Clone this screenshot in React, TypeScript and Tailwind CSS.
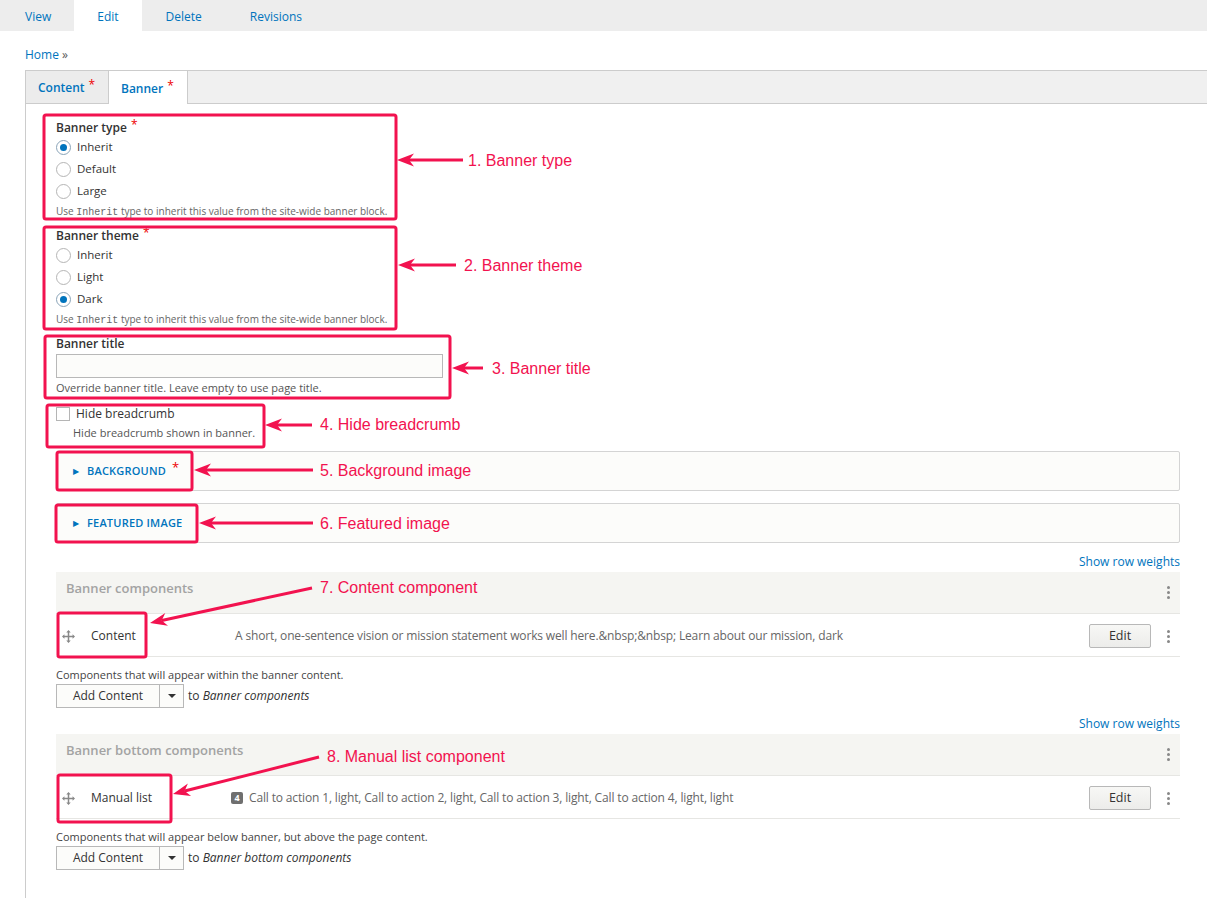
import React from "react";

const RED = "#f2124f";

type Point = [number, number];

const Radio = ({ checked, label }: { checked?: boolean; label: string }) => (
  <div className="flex h-[22px] items-center gap-[6px]">
    <span
      className={`flex h-[15px] w-[15px] items-center justify-center rounded-full border bg-white ${
        checked ? "border-[#8aa4b8]" : "border-[#b5b5b5]"
      }`}
    >
      {checked && <span className="h-[7px] w-[7px] rounded-full bg-[#0074bd]" />}
    </span>
    <span className="text-[11.5px] text-[#333]">{label}</span>
  </div>
);

const Required = () => <span className="ml-[4px] -mt-[6px] text-[12px] font-normal leading-none text-[#e00]">*</span>;

const InheritHelp = () => (
  <div className="h-[18px] text-[10px] leading-[18px] text-[#666]">
    Use <code className="font-['Liberation_Mono',monospace] text-[10px]">Inherit</code> type to inherit this value from the
    site-wide banner block.
  </div>
);

const DragIcon = () => (
  <svg width="13" height="13" viewBox="0 0 14 14" className="text-[#888]">
    <path d="M7 2v10M2 7h10" stroke="currentColor" strokeWidth="1.6" />
    <path d="M7 0l2.4 2.6H4.6zM7 14l2.4-2.6H4.6zM0 7l2.6-2.4v4.8zM14 7l-2.6-2.4v4.8z" fill="currentColor" />
  </svg>
);

const Kebab = () => (
  <div className="flex w-[14px] flex-col items-center gap-[2px]">
    <span className="h-[3px] w-[3px] rounded-full bg-[#888]" />
    <span className="h-[3px] w-[3px] rounded-full bg-[#888]" />
    <span className="h-[3px] w-[3px] rounded-full bg-[#888]" />
  </div>
);

const Details = ({ title, required }: { title: string; required?: boolean }) => (
  <div className="flex h-[40px] items-center rounded-[2px] border border-[#d4d4d4] bg-[#fcfcfa] pl-[16px]">
    <span className="mr-[8px] text-[8px] text-[#0074bd]">▶</span>
    <span className="text-[11px] font-semibold uppercase tracking-[0.2px] text-[#0074bd]">{title}</span>
    {required && <span className="ml-[6px] -mt-[6px] text-[13px] text-[#e00]">*</span>}
  </div>
);

const ComponentTable = ({
  title,
  label,
  summary,
  badge,
}: {
  title: string;
  label: string;
  summary: string;
  badge?: string;
}) => (
  <div>
    <div className="flex h-[42px] items-center justify-between border-b border-[#e6e6e3] bg-[#f5f5f2] pl-[10px] pr-[5px]">
      <span className="-mt-[8px] text-[13px] font-semibold text-[#a3a3a3]">{title}</span>
      <Kebab />
    </div>
    <div className="flex h-[43px] items-center border-b border-[#e6e6e3] pl-[6px] pr-[5px] pt-[2px]">
      <DragIcon />
      <span className="ml-[16px] w-[144px] text-[12px] text-[#333]">{label}</span>
      <span className="flex flex-1 items-center whitespace-nowrap text-[12px] tracking-[-0.15px] text-[#666]">
        {badge && (
          <span className="-ml-[4px] mr-[6px] flex h-[12px] w-[12px] items-center justify-center rounded-[2px] bg-[#6f6f6f] text-[9px] font-bold tracking-normal text-white">
            {badge}
          </span>
        )}
        {summary}
      </span>
      <button className="mr-[10px] h-[24px] w-[62px] rounded-[2px] border border-[#b8b8b8] bg-gradient-to-b from-[#f7f7f5] to-[#ececea] text-[12.5px] text-[#333]">
        Edit
      </button>
      <Kebab />
    </div>
  </div>
);

const AddContent = ({ help, target }: { help: string; target: string }) => (
  <div>
    <div className="mt-[9px] h-[18px] text-[11px] leading-[18px] text-[#444]">{help}</div>
    <div className="flex items-center">
      <div className="flex h-[24px] border border-[#b8b8b8] bg-[#fcfcfa]">
        <span className="flex w-[103px] items-center justify-center border-r border-[#b8b8b8] text-[12px] text-[#333]">
          Add Content
        </span>
        <span className="flex w-[23px] items-center justify-center">
          <span className="h-0 w-0 border-x-[4px] border-t-[4px] border-x-transparent border-t-[#333]" />
        </span>
      </div>
      <span className="ml-[4px] text-[12px] text-[#333]">
        to <em>{target}</em>
      </span>
    </div>
  </div>
);

const boxes = [
  [44, 115, 396, 219],
  [44, 227, 396, 329],
  [45, 336, 450, 398],
  [47, 405, 264, 447],
  [57, 452, 192, 490],
  [56, 505, 197, 542],
  [58, 613, 146, 657],
  [58, 775, 171, 822],
];

const arrows: [Point, Point][] = [
  [[463, 160], [397, 160]],
  [[456, 265], [398, 265]],
  [[483, 368], [452, 368]],
  [[312, 425], [265, 425]],
  [[313, 470], [194, 470]],
  [[313, 523], [199, 523]],
  [[312, 588], [150, 623]],
  [[319, 757], [173, 794]],
];

const labels: [number, number, string][] = [
  [468, 161, "1. Banner type"],
  [464, 266, "2. Banner theme"],
  [492, 369, "3. Banner title"],
  [320, 425, "4. Hide breadcrumb"],
  [320, 471, "5. Background image"],
  [320, 524, "6. Featured image"],
  [320, 588, "7. Content component"],
  [327, 757, "8. Manual list component"],
];

const arrowHead = ([from, to]: [Point, Point]) => {
  const dx = to[0] - from[0];
  const dy = to[1] - from[1];
  const len = Math.hypot(dx, dy);
  const ux = dx / len;
  const uy = dy / len;
  const bx = to[0] - ux * 17;
  const by = to[1] - uy * 17;
  const px = -uy * 6.5;
  const py = ux * 6.5;
  const mx = to[0] - ux * 12;
  const my = to[1] - uy * 12;
  return {
    head: `M${to[0]},${to[1]} L${bx + px},${by + py} L${mx},${my} L${bx - px},${by - py} Z`,
    line: `M${from[0]},${from[1]} L${mx},${my}`,
  };
};

const Annotations = () => (
  <>
    <svg className="pointer-events-none absolute inset-0" width="1207" height="898">
      {boxes.map(([x1, y1, x2, y2], i) => (
        <rect key={i} x={x1} y={y1} width={x2 - x1} height={y2 - y1} rx="2" fill="none" stroke={RED} strokeWidth="3" />
      ))}
      {arrows.map((a, i) => {
        const { head, line } = arrowHead(a);
        return (
          <g key={i}>
            <path d={line} stroke={RED} strokeWidth="3" />
            <path d={head} fill={RED} />
          </g>
        );
      })}
    </svg>
    {labels.map(([x, y, text]) => (
      <div
        key={text}
        className="pointer-events-none absolute -translate-y-1/2 whitespace-nowrap font-['Liberation_Sans',Arial,sans-serif] text-[16px] leading-none text-[#f2124f]"
        style={{ left: x, top: y }}
      >
        {text}
      </div>
    ))}
  </>
);

export default function App() {
  return (
    <div className="relative h-[898px] w-[1207px] overflow-hidden bg-white font-['Open_Sans',sans-serif]">
      <div className="flex h-[31px] bg-[#ededed] pl-[2px] text-[12px] text-[#0074bd]">
        <span className="flex items-center px-[23px] pt-[3px]">View</span>
        <span className="flex items-center bg-white px-[23px] pt-[3px]">Edit</span>
        <span className="flex items-center px-[24px] pt-[3px]">Delete</span>
        <span className="flex items-center px-[24px] pt-[3px]">Revisions</span>
      </div>

      <div className="ml-[25px] mt-[15px] h-[18px] text-[12px] leading-[18px]">
        <span className="text-[#0074bd]">Home</span> <span className="text-[#555]">»</span>
      </div>

      <div className="ml-[25px] mt-[6px] h-[830px] border-l border-t border-[#ccc]">
        <div className="flex h-[33px] bg-[#f0f0f0]">
          <div className="flex w-[83px] items-center border-b border-r border-[#ccc] bg-[#ececec] pl-[12px] pt-[2px] text-[12px] font-semibold text-[#0074bd]">
            Content
            <Required />
          </div>
          <div className="flex w-[79px] items-center border-r border-[#ccc] bg-white pl-[12px] pt-[2px] text-[12px] font-semibold text-[#0074bd]">
            Banner
            <Required />
          </div>
          <div className="flex-1 border-b border-[#ccc]" />
        </div>

        <div className="pl-[30px] pr-[27px] pt-[15px]">
          <div className="flex h-[18px] items-center text-[12px] font-semibold text-[#333]">
            Banner type
            <Required />
          </div>
          <div className="-mt-[1px]">
            <Radio checked label="Inherit" />
            <Radio label="Default" />
            <Radio label="Large" />
          </div>
          <InheritHelp />

          <div className="mt-[7px] flex h-[18px] items-center text-[12px] font-semibold text-[#333]">
            Banner theme
            <Required />
          </div>
          <div className="-mt-[1px]">
            <Radio label="Inherit" />
            <Radio label="Light" />
            <Radio checked label="Dark" />
          </div>
          <InheritHelp />

          <div className="mt-[7px] flex h-[18px] items-center text-[12px] font-semibold text-[#333]">Banner title</div>
          <div className="mt-[1px] h-[24px] w-[387px] border border-[#b8b8b8] bg-[#fcfcfa]" />
          <div className="h-[20px] text-[11px] leading-[20px] text-[#555]">
            Override banner title. Leave empty to use page title.
          </div>

          <div className="mt-[8px] flex h-[15px] items-center gap-[6px]">
            <span className="h-[14px] w-[14px] border border-[#b5b5b5] bg-white" />
            <span className="text-[12px] text-[#333]">Hide breadcrumb</span>
          </div>
          <div className="ml-[17px] mt-[2px] h-[20px] text-[11px] leading-[20px] text-[#555]">
            Hide breadcrumb shown in banner.
          </div>

          <div className="mt-[8px]">
            <Details title="Background" required />
          </div>
          <div className="mt-[12px]">
            <Details title="Featured image" />
          </div>

          <div className="mt-[9px] h-[20px] text-right text-[12px] leading-[19px] text-[#0074bd]">Show row weights</div>
          <ComponentTable
            title="Banner components"
            label="Content"
            summary={"A short, one-sentence vision or mission statement works well here.&nbsp;&nbsp; Learn about our mission, dark"}
          />
          <AddContent help="Components that will appear within the banner content." target="Banner components" />

          <div className="mt-[6px] h-[20px] text-right text-[12px] leading-[19px] text-[#0074bd]">Show row weights</div>
          <ComponentTable
            title="Banner bottom components"
            label="Manual list"
            badge="4"
            summary="Call to action 1, light, Call to action 2, light, Call to action 3, light, Call to action 4, light, light"
          />
          <AddContent
            help="Components that will appear below banner, but above the page content."
            target="Banner bottom components"
          />
        </div>
      </div>

      <Annotations />
    </div>
  );
}
